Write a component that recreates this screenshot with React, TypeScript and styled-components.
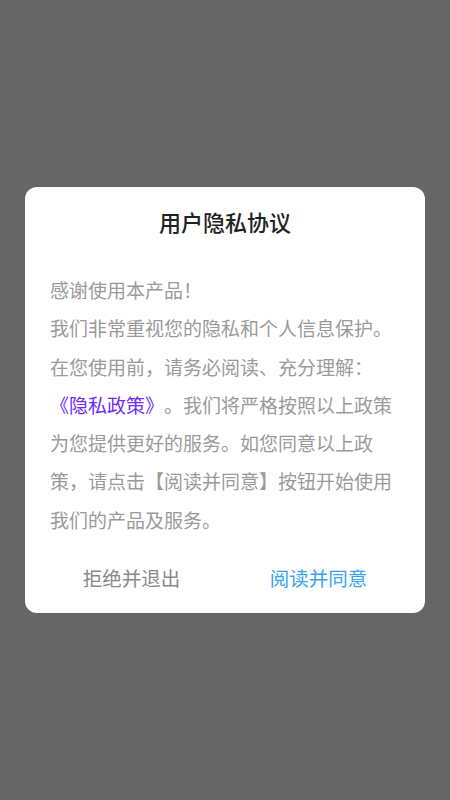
import React from "react";
import styled, { createGlobalStyle } from "styled-components";

const Global = createGlobalStyle`
  html, body { margin: 0; padding: 0; background: #666666; }
  body { font-family: "Noto Sans CJK SC", "Noto Sans", sans-serif; }
  * { box-sizing: border-box; }
`;

const Overlay = styled.div`
  width: 450px;
  height: 800px;
  background: #666666;
  display: flex;
  align-items: center;
  justify-content: center;
`;

const Card = styled.div`
  width: 400px;
  background: #ffffff;
  border-radius: 12px;
  padding: 19px 0 10px;
  display: flex;
  flex-direction: column;
`;

const Title = styled.h1`
  margin: 0;
  font-size: 22px;
  line-height: 30px;
  font-weight: 500;
  color: #222222;
  text-align: center;
`;

const Body = styled.p`
  margin: 35px 0 0;
  padding: 0 20px 0 25px;
  font-size: 19px;
  line-height: 38.2px;
  color: #9a9a9a;
  white-space: nowrap;
  text-spacing-trim: space-all;
`;

const Link = styled.span`
  color: #6c2cf6;
`;

const Actions = styled.div`
  margin-top: 14px;
  padding: 0 13px;
  display: grid;
  grid-template-columns: 1fr 1fr;
`;

const ActionButton = styled.button<{ $primary?: boolean }>`
  height: 50px;
  border: none;
  background: transparent;
  font-family: inherit;
  font-size: 19.5px;
  color: ${(p) => (p.$primary ? "#3ba2f2" : "#8a8a8a")};
  text-align: center;
  padding: 0;
`;

export default function App() {
  return (
    <>
      <Global />
      <Overlay>
        <Card>
          <Title>用户隐私协议</Title>
          <Body>
            感谢使用本产品！
            <br />
            我们非常重视您的隐私和个人信息保护。
            <br />
            在您使用前，请务必阅读、充分理解：
            <br />
            <Link>《隐私政策》</Link>。我们将严格按照以上政策
            <br />
            为您提供更好的服务。如您同意以上政
            <br />
            策，请点击【阅读并同意】按钮开始使用
            <br />
            我们的产品及服务。
          </Body>
          <Actions>
            <ActionButton>拒绝并退出</ActionButton>
            <ActionButton $primary>阅读并同意</ActionButton>
          </Actions>
        </Card>
      </Overlay>
    </>
  );
}
